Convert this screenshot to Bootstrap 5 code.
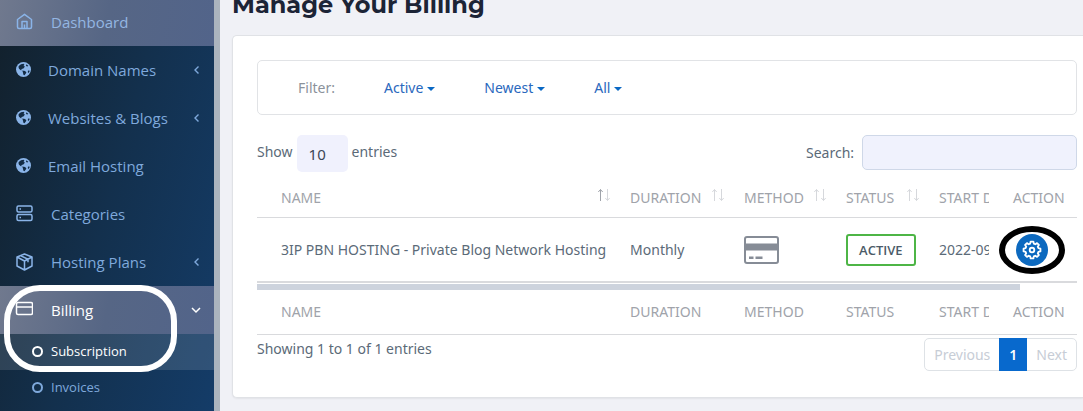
<!DOCTYPE html>
<html lang="en">
<head>
<meta charset="utf-8">
<meta name="viewport" content="width=device-width, initial-scale=1">
<title>Manage Your Billing</title>
<link href="https://cdn.jsdelivr.net/npm/bootstrap@5.3.0/dist/css/bootstrap.min.css" rel="stylesheet">
<style>
  body { font-family: "Noto Sans", "Open Sans", sans-serif; font-size: 14px; line-height: 20px; color: #5b6a78; background: #f0f1f6; }
  .shell { height: 100vh; overflow: hidden; }

  /* sidebar */
  .side { width: 220px; border-right: 6px solid #abb4be; background: linear-gradient(105deg, #12202b 0%, #13304d 50%, #143c68 100%); font-family: "Open Sans", "Noto Sans", sans-serif; font-size: 15px; }
  .side-list { margin-top: -2px; }
  .side-link { height: 48px; padding: 0 13px 0 15px; color: #7fa9dc; text-decoration: none; display: flex; align-items: center; }
  .side-link svg:first-child { width: 18px; height: 18px; margin-right: 18px; color: #8ab4e8; }
  .side-link.globe svg:first-child { margin-right: 15px; }
  .side-link.lit { background: linear-gradient(100deg, #70798e, #566685 50%, #52648a); color: #94b6e2; }
  .side-link.open, .side-link.open svg:first-child, .sub-link.lit { color: #fff; }
  .sub-link { height: 36px; padding: 0 0 2px 32px; font-size: 13px; color: #7fa9dc; text-decoration: none; display: flex; align-items: center; }
  .sub-link.lit { background: rgba(255, 255, 255, .12); }
  .dot { width: 11px; height: 11px; border: 2px solid currentColor; border-radius: 50%; margin-right: 8px; }
  .ring-white { position: absolute; inset: -1px 37px -2px 4px; border: 6px solid #fff; border-radius: 36px; pointer-events: none; }

  /* content */
  .page-title { font-family: "Montserrat", "Inter", sans-serif; font-size: 24px; line-height: 32px; font-weight: 700; color: #1c2436; margin: -11px 0 14px; }
  .panel { background: #fff; border: 1px solid #e0e2e6; border-right: 0; border-radius: 5px 0 0 5px; padding: 24px 6px 26px 24px; box-shadow: 0 1px 2px rgba(0, 0, 0, .06); }
  .filter { height: 55px; border: 1px solid #e1e3e6; border-radius: 5px; padding: 0 40px; gap: 49px; color: #8b929b; }
  .filter button { color: #2a68bd; background: none; border: 0; padding: 0; }
  .filter button::after { margin-left: 4px; vertical-align: 2px; color: #0a68c4; }
  .len-label { padding-top: 7px; }
  .len-select { width: 51px; height: 37px; padding: 0 12px; font-size: 15px; color: #3c4656; background: #f0f1fd; border: 0; border-radius: 5px; appearance: none; margin: 0 4px; }
  .find { width: 215px; height: 35px; background: #f0f2fd; border: 1px solid #cfd8e8; border-radius: 5px; margin-left: 8px; padding: 0 10px; }
  .bill { table-layout: fixed; width: 100%; }
  .bill th { font-weight: 400; color: #a0a3aa; }
  .bill th, .bill td { padding: 0 7px 0 12px; white-space: nowrap; overflow: hidden; }
  .bill tbody td { padding-top: 2px; }
  .bill th:first-child, .bill td:first-child, .bill th:last-child, .bill td:last-child { padding-left: 24px; }
  .bill .cut { padding-right: 0; text-overflow: clip; }
  .bill thead tr { height: 37px; border-bottom: 1px solid #d9dadd; }
  .bill tbody tr { height: 65px; border-bottom: 2px solid #d9dadd; }
  .bill tfoot tr { height: 44px; border-bottom: 1px solid #d9dadd; }
  .bill .lastcol { overflow: visible; }
  .bill tfoot .rail-row { height: 7px; border: 0; }
  .bill .rail-row td { padding: 1px 57px 0 0; line-height: 0; }
  .rail { height: 6px; background: #cdd3dd; }
  .arrows { width: 14px; height: 14px; flex: none; }
  .state { border: 2px solid #4db546; border-radius: 3px; font-family: "Open Sans", sans-serif; font-size: 13px; line-height: 28px; font-weight: 600; padding: 0 11px; display: inline-block; color: #4b5b68; }
  .gear { width: 32px; height: 32px; border: 0; border-radius: 50%; background: #0c69bf; color: #fff; padding: 0; display: flex; align-items: center; justify-content: center; margin-left: 3px; position: relative; }
  .gear::after { content: ""; position: absolute; inset: -8px -17px; border: 6px solid #000; border-radius: 50%; }
  .pager { padding-top: 3px; }
  .pager .page-link { height: 33px; padding: 0 9px; line-height: 31px; font-size: 14px; color: #c7cdd6; border-color: #dee2e6; background: #fff; }
  .pager .active .page-link { background: #0869cd; border-color: #0869cd; color: #fff; font-weight: 600; }
  .pager .page-item:first-child .page-link { border-radius: 5px 0 0 5px; }
  .pager .page-item:last-child .page-link { border-radius: 0 5px 5px 0; }
</style>
</head>
<body>
<svg class="d-none" aria-hidden="true">
  <symbol id="globe" viewBox="0 0 18 18">
    <circle cx="8.500" cy="8.500" r="7.500" fill="currentColor"/>
    <path d="M4.300 4.600L6 3.200l2.600-.5.8 1-.9 1.300 1.500.4-1.600 2-1.800.7-.4 1.500L4 7.800 3.400 5.800zM11.300 3.200l2 1.600-.9.800-1.400-.7zM7.300 9.600l2.800.3 1.300 1.500-1.800 2.800-1.200-.5-.4-2zM13 9.500l1.800.3-1 2.200-1-.8z" fill="#132c45"/>
  </symbol>
  <symbol id="left" viewBox="0 0 8 10"><path d="M5.500 1.500L2 5l3.500 3.500" fill="none" stroke="currentColor" stroke-width="1.400"/></symbol>
  <symbol id="sort" viewBox="0 0 14 14"><path d="M3.500 13V1.500M1.300 4l2.200-2.500L5.700 4" fill="none" stroke="var(--up, #d6d8dc)"/><path d="M10.500 1v11.500M8.300 10l2.200 2.500L12.700 10" fill="none" stroke="#d6d8dc"/></symbol>
</svg>

<div class="shell d-flex">
  <nav class="side flex-shrink-0" aria-label="Main">
    <ul class="side-list list-unstyled mb-0">
      <li><a class="side-link lit" href="#"><svg viewBox="0 0 18 18" fill="none" stroke="currentColor" stroke-width="1.500" stroke-linejoin="round"><path d="M2.500 6.500L9.500 1.300 16.500 6.500v7.500q0 1.500-1.500 1.500H4q-1.500 0-1.500-1.500zM7 15.500V8.500h5v7M9.500 15.500v-4"/></svg>Dashboard</a></li>
      <li><a class="side-link globe" href="#"><svg><use href="#globe"/></svg>Domain Names<svg class="ms-auto" width="8" height="10"><use href="#left"/></svg></a></li>
      <li><a class="side-link globe" href="#"><svg><use href="#globe"/></svg>Websites &amp; Blogs<svg class="ms-auto" width="8" height="10"><use href="#left"/></svg></a></li>
      <li><a class="side-link globe" href="#"><svg><use href="#globe"/></svg>Email Hosting</a></li>
      <li><a class="side-link" href="#"><svg viewBox="0 0 18 18" fill="none" stroke="currentColor" stroke-width="1.500"><rect x="2" y="1" width="15" height="6" rx="1.500"/><rect x="2" y="9.500" width="15" height="6" rx="1.500"/><path d="M4.500 4h1.500M4.500 12.500h1.500"/></svg>Categories</a></li>
      <li><a class="side-link" href="#"><svg viewBox="0 0 18 18" fill="none" stroke="currentColor" stroke-width="1.500" stroke-linejoin="round"><path d="M9.500 1L17 4v9l-7.500 4L2 13V4zM2 4l7.500 4L17 4M9.500 8v9M5.500 2.600L13 6.200v3"/></svg>Hosting Plans<svg class="ms-auto" width="8" height="10"><use href="#left"/></svg></a></li>
      <li>
        <div class="position-relative">
          <a class="side-link lit open" href="#"><svg viewBox="0 0 18 18" fill="none" stroke="currentColor" stroke-width="1.500"><rect x="1.500" y="1.500" width="16" height="12" rx="1.500"/><path d="M1.500 6h16"/></svg>Billing<svg class="ms-auto" width="10" height="8" viewBox="0 0 10 8" fill="none" stroke="currentColor" stroke-width="1.500"><path d="M1 2l4 4 4-4"/></svg></a>
          <a class="sub-link lit" href="#"><span class="dot"></span>Subscription</a>
          <span class="ring-white"></span>
        </div>
        <a class="sub-link" href="#"><span class="dot"></span>Invoices</a>
      </li>
    </ul>
  </nav>

  <main class="flex-grow-1 ps-2 ms-1">
    <h1 class="page-title">Manage Your Billing</h1>
    <section class="panel">
      <div class="filter d-flex align-items-center">
        <span>Filter:</span>
        <button type="button" class="dropdown-toggle">Active</button>
        <button type="button" class="dropdown-toggle">Newest</button>
        <button type="button" class="dropdown-toggle">All</button>
      </div>

      <div class="d-flex justify-content-between align-items-start pt-3 mt-1">
        <div class="d-flex">
          <label for="len" class="len-label">Show</label>
          <select id="len" class="len-select"><option>10</option></select>
          <span class="len-label">entries</span>
        </div>
        <div class="d-flex align-items-center">
          <label for="find">Search:</label>
          <input id="find" type="search" class="find">
        </div>
      </div>

      <table class="bill mt-2">
        <colgroup><col><col style="width:114px"><col style="width:102px"><col style="width:93px"><col style="width:62px"><col style="width:88px"></colgroup>
        <thead>
          <tr>
            <th><div class="d-flex justify-content-between">NAME<svg class="arrows" style="--up:#9fa3aa"><use href="#sort"/></svg></div></th>
            <th><div class="d-flex justify-content-between">DURATION<svg class="arrows"><use href="#sort"/></svg></div></th>
            <th><div class="d-flex justify-content-between">METHOD<svg class="arrows"><use href="#sort"/></svg></div></th>
            <th><div class="d-flex justify-content-between">STATUS<svg class="arrows"><use href="#sort"/></svg></div></th>
            <th class="cut">START DATE</th>
            <th class="lastcol">ACTION</th>
          </tr>
        </thead>
        <tbody>
          <tr>
            <td>3IP PBN HOSTING - Private Blog Network Hosting</td>
            <td>Monthly</td>
            <td><svg class="d-block" width="35" height="28" viewBox="0 0 35 28" role="img" aria-label="Card"><rect x="1" y="1" width="33" height="26" rx="2" fill="none" stroke="#868c96" stroke-width="2"/><path d="M1 7.500h33v7H1zM5 20.500h4.500v2.500H5zM11.500 20.500h7v2.500h-7z" fill="#868c96"/></svg></td>
            <td><span class="state">ACTIVE</span></td>
            <td class="cut">2022-09-14</td>
            <td class="lastcol"><button type="button" class="gear" aria-label="Manage"><svg width="22" height="22" viewBox="0 0 24 24" fill="none" stroke="currentColor" stroke-width="2" stroke-linejoin="round"><path d="M10 5L10.500 2.800h3L14 5l1.600.7L17.500 4.500l2 2L18.300 8.400 19 10l2.200.5v3L19 14l-.7 1.600 1.200 1.900-2 2-1.900-1.200L14 19l-.5 2.200h-3L10 19l-1.600-.7-1.900 1.200-2-2 1.200-1.900L5 14l-2.200-.5v-3L5 10l.7-1.600L4.500 6.500l2-2 1.900 1.200z"/><circle cx="12" cy="12" r="2.500"/></svg></button></td>
          </tr>
        </tbody>
        <tfoot>
          <tr class="rail-row"><td colspan="6"><div class="rail"></div></td></tr>
          <tr><th>NAME</th><th>DURATION</th><th>METHOD</th><th>STATUS</th><th class="cut">START DATE</th><th class="lastcol">ACTION</th></tr>
        </tfoot>
      </table>

      <div class="d-flex justify-content-between">
        <div class="pt-1">Showing 1 to 1 of 1 entries</div>
        <ul class="pagination pager mb-0">
          <li class="page-item"><a class="page-link" href="#">Previous</a></li>
          <li class="page-item active"><a class="page-link" href="#">1</a></li>
          <li class="page-item"><a class="page-link" href="#">Next</a></li>
        </ul>
      </div>
    </section>
  </main>
</div>
<script src="https://cdn.jsdelivr.net/npm/bootstrap@5.3.0/dist/js/bootstrap.bundle.min.js"></script>
</body>
</html>
